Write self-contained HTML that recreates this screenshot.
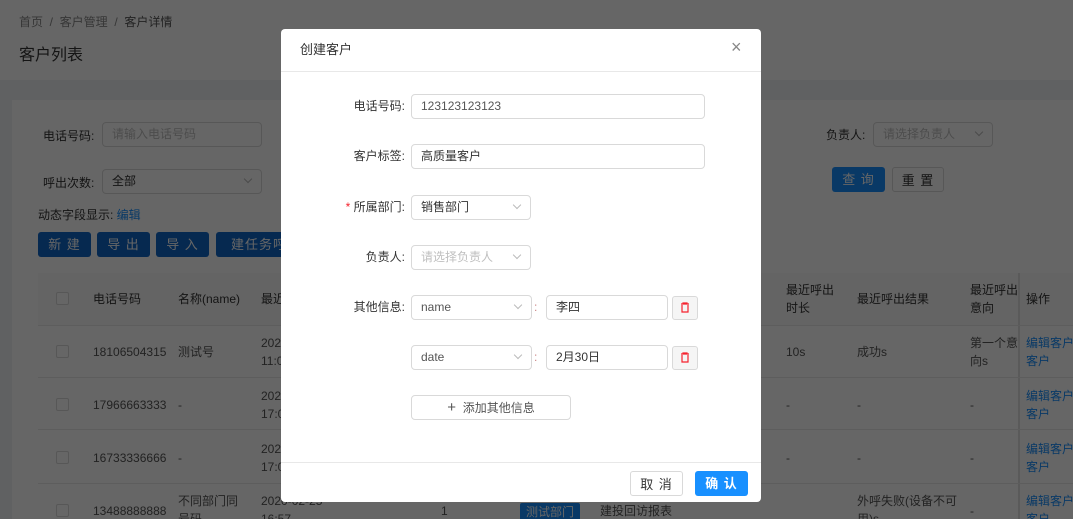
<!DOCTYPE html>
<html><head><meta charset="utf-8"><style>
*{box-sizing:border-box;margin:0;padding:0}
html{width:1073px;height:519px;overflow:hidden}
body{width:1073px;height:519px;overflow:hidden;position:relative;font-family:"Liberation Sans","Noto Sans CJK SC",sans-serif;font-size:12px;color:#333;background:#f0f2f5}
.abs{position:absolute}
.hdr{left:0;top:0;width:1073px;height:80px;background:#fff}
.card{left:12px;top:100px;width:1061px;height:419px;background:#fff}
.inp{position:absolute;border:1px solid #d9d9d9;border-radius:4px;background:#fff;height:25px;line-height:23px;padding-left:9px;font-size:12px}
.ph{color:#bfbfbf}
.btn{position:absolute;height:25px;line-height:25px;text-align:center;border-radius:3px;font-size:13px;color:#fff;background:#1890ff;letter-spacing:1px}
.th{position:absolute;top:273px;height:52px;background:#fafafa}
.row{position:absolute;left:38px;width:1035px;height:1px;background:#e8e8e8}
.cb{position:absolute;width:13px;height:13px;border:1px solid #d9d9d9;border-radius:2px;background:#fff}
.t{position:absolute;font-size:12px;line-height:18px;color:#555;white-space:nowrap}
.lnk{color:#1890ff}
.ov{left:0;top:0;width:1073px;height:519px;background:rgba(0,0,0,.6)}
.modal{left:281px;top:29px;width:480px;height:473px;background:#fff;border-radius:4px;overflow:hidden}
.lab{position:absolute;right:356px;font-size:12px;color:#333;line-height:25px;text-align:right}
.arr{position:absolute;right:10px;top:6px;width:6px;height:6px;border-right:1px solid #bbb;border-bottom:1px solid #bbb;transform:rotate(45deg)}
.del{position:absolute;width:26px;height:24px;border:1px solid #d9d9d9;border-radius:3px;background:#f5f5f5}
</style></head><body>
<div class="abs hdr"></div>
<div class="t" style="left:19px;top:13px;color:#888">首页 &nbsp;/&nbsp; 客户管理 &nbsp;/&nbsp; <span style="color:#555">客户详情</span></div>
<div class="t" style="left:19px;top:46px;font-size:16px;line-height:20px;color:#333">客户列表</div>
<div class="abs card"></div>
<div class="t" style="left:43px;top:127px;color:#333">电话号码:</div>
<div class="inp ph" style="left:102px;top:122px;width:160px">请输入电话号码</div>
<div class="t" style="left:43px;top:174px;color:#333">呼出次数:</div>
<div class="inp" style="left:102px;top:169px;width:160px">全部<span class="arr"></span></div>
<div class="t" style="left:826px;top:126px;color:#333">负责人:</div>
<div class="inp ph" style="left:873px;top:122px;width:120px">请选择负责人<span class="arr"></span></div>
<div class="btn" style="left:832px;top:167px;width:53px">查 询</div>
<div class="btn" style="left:892px;top:167px;width:52px;background:#fff;border:1px solid #d9d9d9;color:#333">重 置</div>
<div class="t" style="left:38px;top:206px;color:#333">动态字段显示: <span class="lnk">编辑</span></div>
<div class="btn" style="left:38px;top:232px;width:53px;background:#1066c8">新 建</div>
<div class="btn" style="left:97px;top:232px;width:53px;background:#1066c8">导 出</div>
<div class="btn" style="left:156px;top:232px;width:53px;background:#1066c8">导 入</div>
<div class="btn" style="left:216px;top:232px;width:100px;background:#1066c8">建任务呼出</div>
<div class="th" style="left:38px;width:1035px"></div>
<div class="cb" style="left:56px;top:292px"></div>
<div class="t" style="left:93px;top:290px;color:#333">电话号码</div>
<div class="t" style="left:178px;top:290px;color:#333">名称(name)</div>
<div class="t" style="left:261px;top:290px;color:#333">最近</div>
<div class="t" style="left:786px;top:281px;color:#333">最近呼出<br>时长</div>
<div class="t" style="left:857px;top:290px;color:#333">最近呼出结果</div>
<div class="t" style="left:970px;top:281px;color:#333">最近呼出<br>意向</div>
<div class="t" style="left:1026px;top:290px;color:#333">操作</div>
<div class="abs" style="left:1018px;top:273px;width:2px;height:246px;background:#e0e0e0"></div>
<div class="row" style="top:325px"></div><div class="row" style="top:377px"></div><div class="row" style="top:429px"></div><div class="row" style="top:483px"></div>
<div class="cb" style="left:56px;top:345px"></div><div class="t" style="left:93px;top:343px">18106504315</div><div class="t" style="left:178px;top:343px">测试号</div><div class="t" style="left:261px;top:334px">2020<br>11:0</div>
<div class="t" style="left:786px;top:343px">10s</div><div class="t" style="left:857px;top:343px">成功s</div><div class="t" style="left:970px;top:334px">第一个意<br>向s</div><div class="t lnk" style="left:1026px;top:334px">编辑客户<br>客户</div>
<div class="cb" style="left:56px;top:398px"></div><div class="t" style="left:93px;top:396px">17966663333</div><div class="t" style="left:178px;top:396px">-</div><div class="t" style="left:261px;top:387px">2020<br>17:0</div>
<div class="t" style="left:786px;top:396px">-</div><div class="t" style="left:857px;top:396px">-</div><div class="t" style="left:970px;top:396px">-</div><div class="t lnk" style="left:1026px;top:387px">编辑客户<br>客户</div>
<div class="cb" style="left:56px;top:451px"></div><div class="t" style="left:93px;top:449px">16733336666</div><div class="t" style="left:178px;top:449px">-</div><div class="t" style="left:261px;top:440px">2020<br>17:0</div>
<div class="t" style="left:786px;top:449px">-</div><div class="t" style="left:857px;top:449px">-</div><div class="t" style="left:970px;top:449px">-</div><div class="t lnk" style="left:1026px;top:440px">编辑客户<br>客户</div>
<div class="cb" style="left:56px;top:504px"></div><div class="t" style="left:93px;top:502px">13488888888</div><div class="t" style="left:178px;top:492px">不同部门同<br>号码</div><div class="t" style="left:261px;top:492px">2020-02-25<br>16:57</div>
<div class="t" style="left:441px;top:502px">1</div>
<div class="abs" style="left:520px;top:503px;width:60px;height:18px;background:#1890ff;border-radius:2px;color:#fff;font-size:12px;text-align:center;line-height:18px">测试部门</div>
<div class="t" style="left:600px;top:502px">建投回访报表</div>
<div class="t" style="left:857px;top:492px">外呼失败(设备不可<br>用)s</div><div class="t" style="left:970px;top:502px">-</div><div class="t lnk" style="left:1026px;top:492px">编辑客户<br>客户</div>
<div class="abs ov"></div>
<div class="abs modal">
<div class="t" style="left:19px;top:12px;font-size:13px;color:#333">创建客户</div>
<div class="t" style="left:450px;top:9px;font-size:18px;color:#888">×</div>
<div class="abs" style="left:0;top:42px;width:480px;height:1px;background:#e8e8e8"></div>
<div class="lab" style="top:65px">电话号码:</div>
<div class="inp" style="left:130px;top:65px;width:294px;color:#555">123123123123</div>
<div class="lab" style="top:115px">客户标签:</div>
<div class="inp" style="left:130px;top:115px;width:294px">高质量客户</div>
<div class="lab" style="top:166px"><span style="color:#f5222d">* </span>所属部门:</div>
<div class="inp" style="left:130px;top:166px;width:120px">销售部门<span class="arr"></span></div>
<div class="lab" style="top:216px">负责人:</div>
<div class="inp ph" style="left:130px;top:216px;width:120px">请选择负责人<span class="arr"></span></div>
<div class="lab" style="top:266px">其他信息:</div>
<div class="inp" style="left:130px;top:266px;width:121px;color:#555">name<span class="arr"></span></div>
<div class="t" style="left:253px;top:269px;color:#c88">:</div>
<div class="inp" style="left:265px;top:266px;width:122px">李四</div>
<div class="del" style="left:391px;top:267px"><svg width="24" height="22" viewBox="0 0 24 22"><path d="M8 7h8M10 7V6h4v1M9 8v7h6V8" fill="none" stroke="#f5222d" stroke-width="1.2"/></svg></div>
<div class="inp" style="left:130px;top:316px;width:121px;color:#555">date<span class="arr"></span></div>
<div class="t" style="left:253px;top:319px;color:#c88">:</div>
<div class="inp" style="left:265px;top:316px;width:122px">2月30日</div>
<div class="del" style="left:391px;top:317px"><svg width="24" height="22" viewBox="0 0 24 22"><path d="M8 7h8M10 7V6h4v1M9 8v7h6V8" fill="none" stroke="#f5222d" stroke-width="1.2"/></svg></div>
<div class="inp" style="left:130px;top:366px;width:160px;text-align:center;padding:0;color:#555"><span style="font-size:15px">+</span>&nbsp; 添加其他信息</div>
<div class="abs" style="left:0;top:433px;width:480px;height:1px;background:#e8e8e8"></div>
<div class="btn" style="left:349px;top:442px;width:53px;background:#fff;border:1px solid #d9d9d9;color:#333">取 消</div>
<div class="btn" style="left:414px;top:442px;width:53px;font-weight:bold">确 认</div>
</div>
</body></html>
